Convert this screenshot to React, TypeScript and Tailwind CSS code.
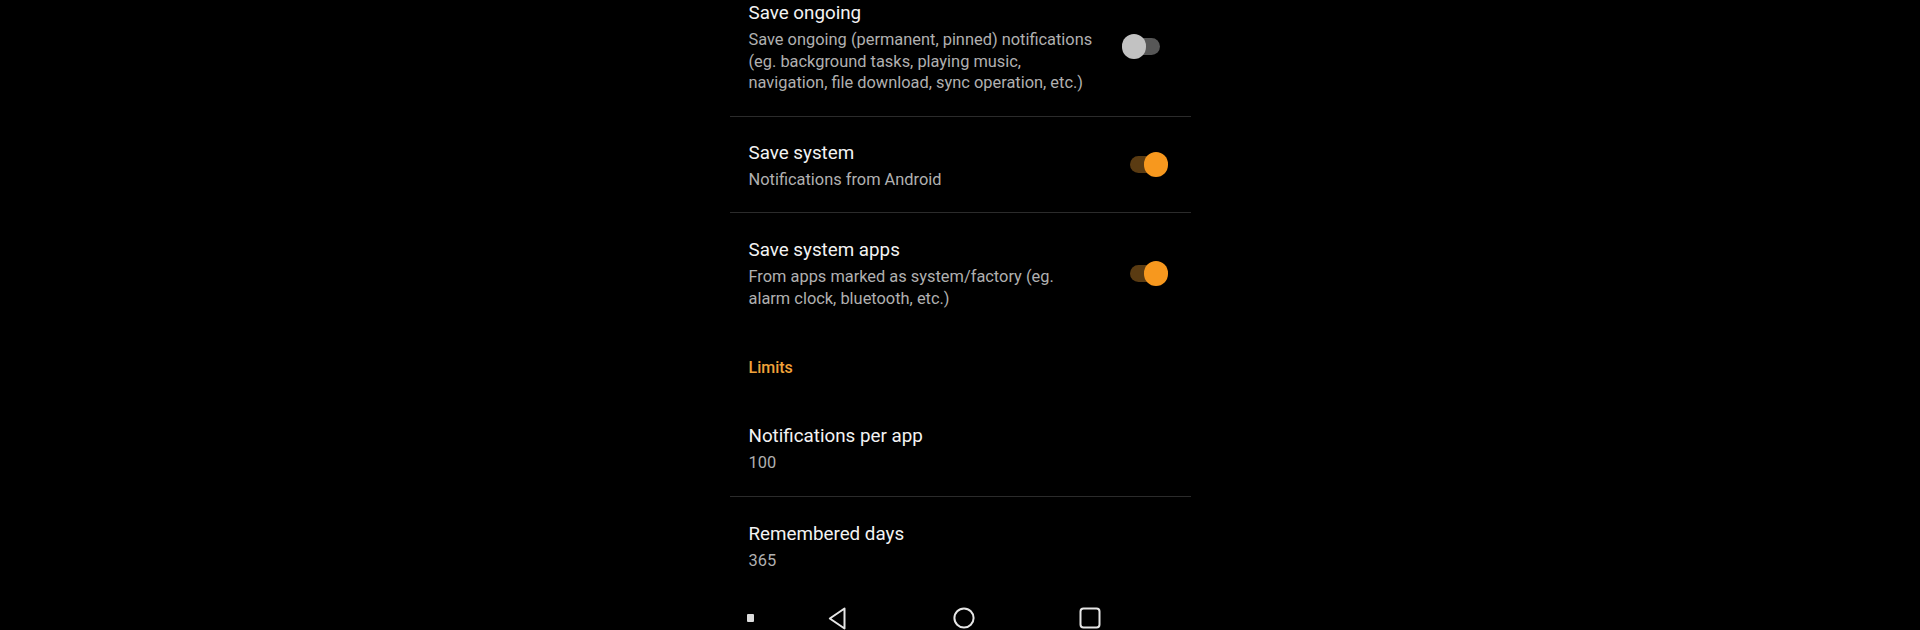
import React from "react";

function Toggle({ on }: { on: boolean }) {
  return (
    <div className="relative w-[46px] h-[26px] shrink-0">
      <div
        className={
          on
            ? "absolute left-[8px] top-[4px] w-[31px] h-[17px] rounded-full bg-[#5a3b12]"
            : "absolute left-[8px] top-[4px] w-[30px] h-[17px] rounded-full bg-[#575757]"
        }
      />
      <div
        className={
          on
            ? "absolute left-[22px] top-[0px] w-[24px] h-[25px] rounded-full bg-[#f7981e]"
            : "absolute left-[0px] top-[0px] w-[24px] h-[25px] rounded-full bg-[#c2c2c2]"
        }
      />
    </div>
  );
}

function Row({
  title,
  sub,
  toggle,
  pt,
  pb = "22",
  border = true,
  first = false,
}: {
  title: string;
  sub: React.ReactNode;
  toggle?: boolean;
  pt: "24" | "25";
  pb?: "22" | "23";
  border?: boolean;
  first?: boolean;
}) {
  return (
    <div
      className={[
        "flex items-center pl-[19px] pr-[23px]",
        pt === "24" ? "pt-[24px]" : "pt-[25px]",
        pb === "22" ? "pb-[22px]" : "pb-[23px]",
        border ? "border-b border-[#2b2b2b]" : "",
        first ? "-mt-[23px]" : "",
      ].join(" ")}
    >
      <div className="flex-1 min-w-0">
        <div className="text-[18.8px] leading-[24px] text-[#f3f3f3]">{title}</div>
        <div className="mt-[4px] text-[16.4px] leading-[21.5px] text-[#b0b0b0]">{sub}</div>
      </div>
      {toggle !== undefined && <Toggle on={toggle} />}
    </div>
  );
}

export default function App() {
  return (
    <div className="h-[630px] w-full bg-black overflow-hidden flex justify-center font-['Roboto',_'Noto_Sans',_sans-serif]">
      <div className="w-[461px]">
        <Row
          first
          pt="24"
          title="Save ongoing"
          sub={
            <>
              Save ongoing (permanent, pinned) notifications
              <br />
              (eg. background tasks, playing music,
              <br />
              navigation, file download, sync operation, etc.)
            </>
          }
          toggle={false}
        />
        <Row pt="24" title="Save system" sub="Notifications from Android" toggle={true} />
        <Row
          pt="25"
          border={false}
          title="Save system apps"
          sub={
            <>
              From apps marked as system/factory (eg.
              <br />
              alarm clock, bluetooth, etc.)
            </>
          }
          toggle={true}
        />
        <div className="pl-[19px] pt-[25px] pb-[20px] text-[16px] leading-[24px] font-medium text-[#f0a23a]">
          Limits
        </div>
        <Row pt="24" title="Notifications per app" sub="100" />
        <Row pt="25" pb="23" border={false} title="Remembered days" sub="365" />
        <div className="h-[48px] flex items-center text-[#e6e6e6]">
          <div className="ml-[17px] w-[7px] h-[8px] rounded-[1px] bg-[#dcdcdc]" />
          <svg className="ml-[74px]" width="18" height="23" viewBox="0 0 18 23" fill="none">
            <path
              d="M16.5 1.5 L1.8 11.5 L16.5 21.5 Z"
              stroke="currentColor"
              strokeWidth="2"
              strokeLinejoin="round"
            />
          </svg>
          <svg className="ml-[107px]" width="22" height="22" viewBox="0 0 22 22" fill="none">
            <circle cx="11" cy="11" r="9.6" stroke="currentColor" strokeWidth="2" />
          </svg>
          <svg className="ml-[104px]" width="22" height="22" viewBox="0 0 22 22" fill="none">
            <rect x="1.5" y="1.5" width="19" height="19" rx="3" stroke="currentColor" strokeWidth="2" />
          </svg>
        </div>
      </div>
    </div>
  );
}
